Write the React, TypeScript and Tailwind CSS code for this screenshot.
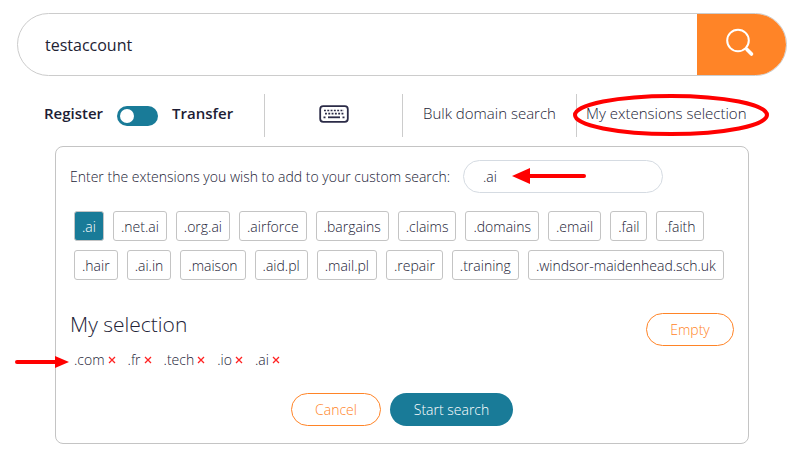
import { useState } from "react";

const suggestions = [
  ".ai",
  ".net.ai",
  ".org.ai",
  ".airforce",
  ".bargains",
  ".claims",
  ".domains",
  ".email",
  ".fail",
  ".faith",
  ".hair",
  ".ai.in",
  ".maison",
  ".aid.pl",
  ".mail.pl",
  ".repair",
  ".training",
  ".windsor-maidenhead.sch.uk",
];

const SearchIcon = () => (
  <svg viewBox="0 0 30 30" className="size-[30px]" fill="none" stroke="currentColor" aria-hidden="true">
    <circle cx="13" cy="12.5" r="10.8" strokeWidth="2" />
    <path d="M20.5 20l1.5 1.5" strokeWidth="2" />
    <path d="M22 21.5l4.5 4.5" strokeWidth="3.6" strokeLinecap="round" />
  </svg>
);

const KeyboardIcon = () => (
  <svg viewBox="0 0 30 18" className="h-[18px] w-[30px]" fill="none" stroke="currentColor" aria-hidden="true">
    <rect x="1.2" y="1.2" width="27.6" height="15.6" rx="3" strokeWidth="1.8" />
    <path d="M5 5.5h20M6 8.7h19" strokeWidth="1.7" strokeDasharray="1.9 1.4" />
    <path d="M4.5 12.3h2M23.5 12.3h2" strokeWidth="1.8" />
    <path d="M9 12.3h12" strokeWidth="1.8" />
  </svg>
);

const App = () => {
  const [domain, setDomain] = useState("testaccount");
  const [transfer, setTransfer] = useState(false);
  const [query, setQuery] = useState(".ai");
  const [selection, setSelection] = useState([".com", ".fr", ".tech", ".io", ".ai"]);

  const add = (ext: string) => {
    if (!selection.includes(ext)) setSelection([...selection, ext]);
  };

  return (
    <main className="min-h-screen bg-white pt-[13px] pr-[14px] pb-4 pl-[17px] font-['Open_Sans',sans-serif] text-[14px] font-light text-[#222236]">
      {/* Search bar */}
      <form
        className="flex h-[63px] overflow-hidden rounded-full border border-[#cccccc]"
        onSubmit={(e) => e.preventDefault()}
      >
        <input
          aria-label="Domain name"
          className="min-w-0 flex-1 px-[27px] text-[16px] font-normal text-[#222233] outline-none"
          value={domain}
          onChange={(e) => setDomain(e.target.value)}
        />
        <button
          type="submit"
          aria-label="Search"
          className="flex w-[89px] items-center justify-center bg-[#ff8427] pr-1 pb-1 text-white"
        >
          <SearchIcon />
        </button>
      </form>

      {/* Options */}
      <nav className="mt-[18px] flex h-[43px] items-stretch pl-[27px] text-[15px]">
        <label className="flex w-[221px] items-center gap-[14px] border-r border-[#cccccc] pb-1 font-semibold text-[#1d1d35]">
          <span>Register</span>
          <input
            type="checkbox"
            role="switch"
            checked={transfer}
            onChange={(e) => setTransfer(e.target.checked)}
            className="mt-1 flex h-5 w-[41px] appearance-none items-center rounded-full bg-[#197b98] px-[3px] before:size-[14px] before:rounded-full before:bg-white checked:justify-end"
          />
          <span>Transfer</span>
        </label>
        <button
          type="button"
          aria-label="Keyboard"
          className="flex w-[138px] items-center justify-center border-r border-[#cccccc] pb-[3px] text-[#2b2b47]"
        >
          <KeyboardIcon />
        </button>
        <a href="#bulk" className="flex w-[174px] items-center justify-center border-r border-[#cccccc] pb-1">
          Bulk domain search
        </a>
        <a href="#extensions" className="relative flex items-center px-[9px] pb-1">
          My extensions selection
          <svg
            viewBox="0 0 197 43"
            className="pointer-events-none absolute top-0 -left-1 h-[43px] w-[197px]"
            fill="none"
            stroke="#ff0000"
            strokeWidth="4"
            aria-hidden="true"
          >
            <ellipse cx="98" cy="21" rx="96" ry="19" />
          </svg>
        </a>
      </nav>

      {/* Custom extensions */}
      <section className="mx-[38px] mt-[9px] rounded-lg border border-[#c4c4c4] px-[14px] pt-[13px] pb-[17px]">
        <div className="flex items-center gap-[13px]">
          <label htmlFor="extension">Enter the extensions you wish to add to your custom search:</label>
          <div className="relative">
            <input
              id="extension"
              className="h-[33px] w-[200px] rounded-full border border-[#d5dbe2] px-[19px] outline-none"
              value={query}
              onChange={(e) => setQuery(e.target.value)}
            />
            <svg
              viewBox="0 0 76 16"
              className="pointer-events-none absolute top-2 left-12 h-4 w-[76px]"
              aria-hidden="true"
            >
              <path d="M1 8L19 0v16z" fill="#ff0000" />
              <path d="M18 8h55" stroke="#ff0000" strokeWidth="4" strokeLinecap="round" />
            </svg>
          </div>
        </div>

        <div className="mt-[18px] flex flex-wrap gap-[9px] pl-1">
          {suggestions.map((ext) => (
            <button
              key={ext}
              type="button"
              onClick={() => add(ext)}
              className={
                selection.includes(ext)
                  ? "h-[30px] rounded-[3px] border border-[#c4c4c4] bg-[#197b98] px-[7px] text-white"
                  : "h-[30px] rounded-[3px] border border-[#c4c4c4] px-[7px]"
              }
            >
              {ext}
            </button>
          ))}
        </div>

        <div className="mt-[33px] flex items-start justify-between">
          <h2 className="text-[21px] leading-[22px]">My selection</h2>
          <button
            type="button"
            onClick={() => setSelection([])}
            className="h-[33px] w-[88px] rounded-full border border-[#ff8427] text-[#ff8427]"
          >
            Empty
          </button>
        </div>

        <ul className="relative mt-[2px] flex gap-3 pl-1 leading-6">
          {selection.map((ext) => (
            <li key={ext} className="flex items-center gap-[3px]">
              {ext}
              <button
                type="button"
                aria-label={`Remove ${ext}`}
                onClick={() => setSelection(selection.filter((item) => item !== ext))}
                className="text-[#ff2222]"
              >
                <svg viewBox="0 0 8 8" className="size-2" stroke="currentColor" strokeWidth="1.3" aria-hidden="true">
                  <path d="M1 1l6 6M7 1l-6 6" />
                </svg>
              </button>
            </li>
          ))}
          <svg
            viewBox="0 0 54 12"
            className="pointer-events-none absolute top-2 -left-[55px] h-3 w-[54px]"
            aria-hidden="true"
          >
            <path d="M54 6L40 0v12z" fill="#ff0000" />
            <path d="M2 6h39" stroke="#ff0000" strokeWidth="4" strokeLinecap="round" />
          </svg>
        </ul>

        <div className="mt-[21px] flex justify-center gap-[9px]">
          <button type="button" className="h-[33px] w-[90px] rounded-full border border-[#ff8427] text-[#ff8427]">
            Cancel
          </button>
          <button type="button" className="h-[33px] w-[123px] rounded-full bg-[#197b98] text-white">
            Start search
          </button>
        </div>
      </section>
    </main>
  );
};

export default App;
